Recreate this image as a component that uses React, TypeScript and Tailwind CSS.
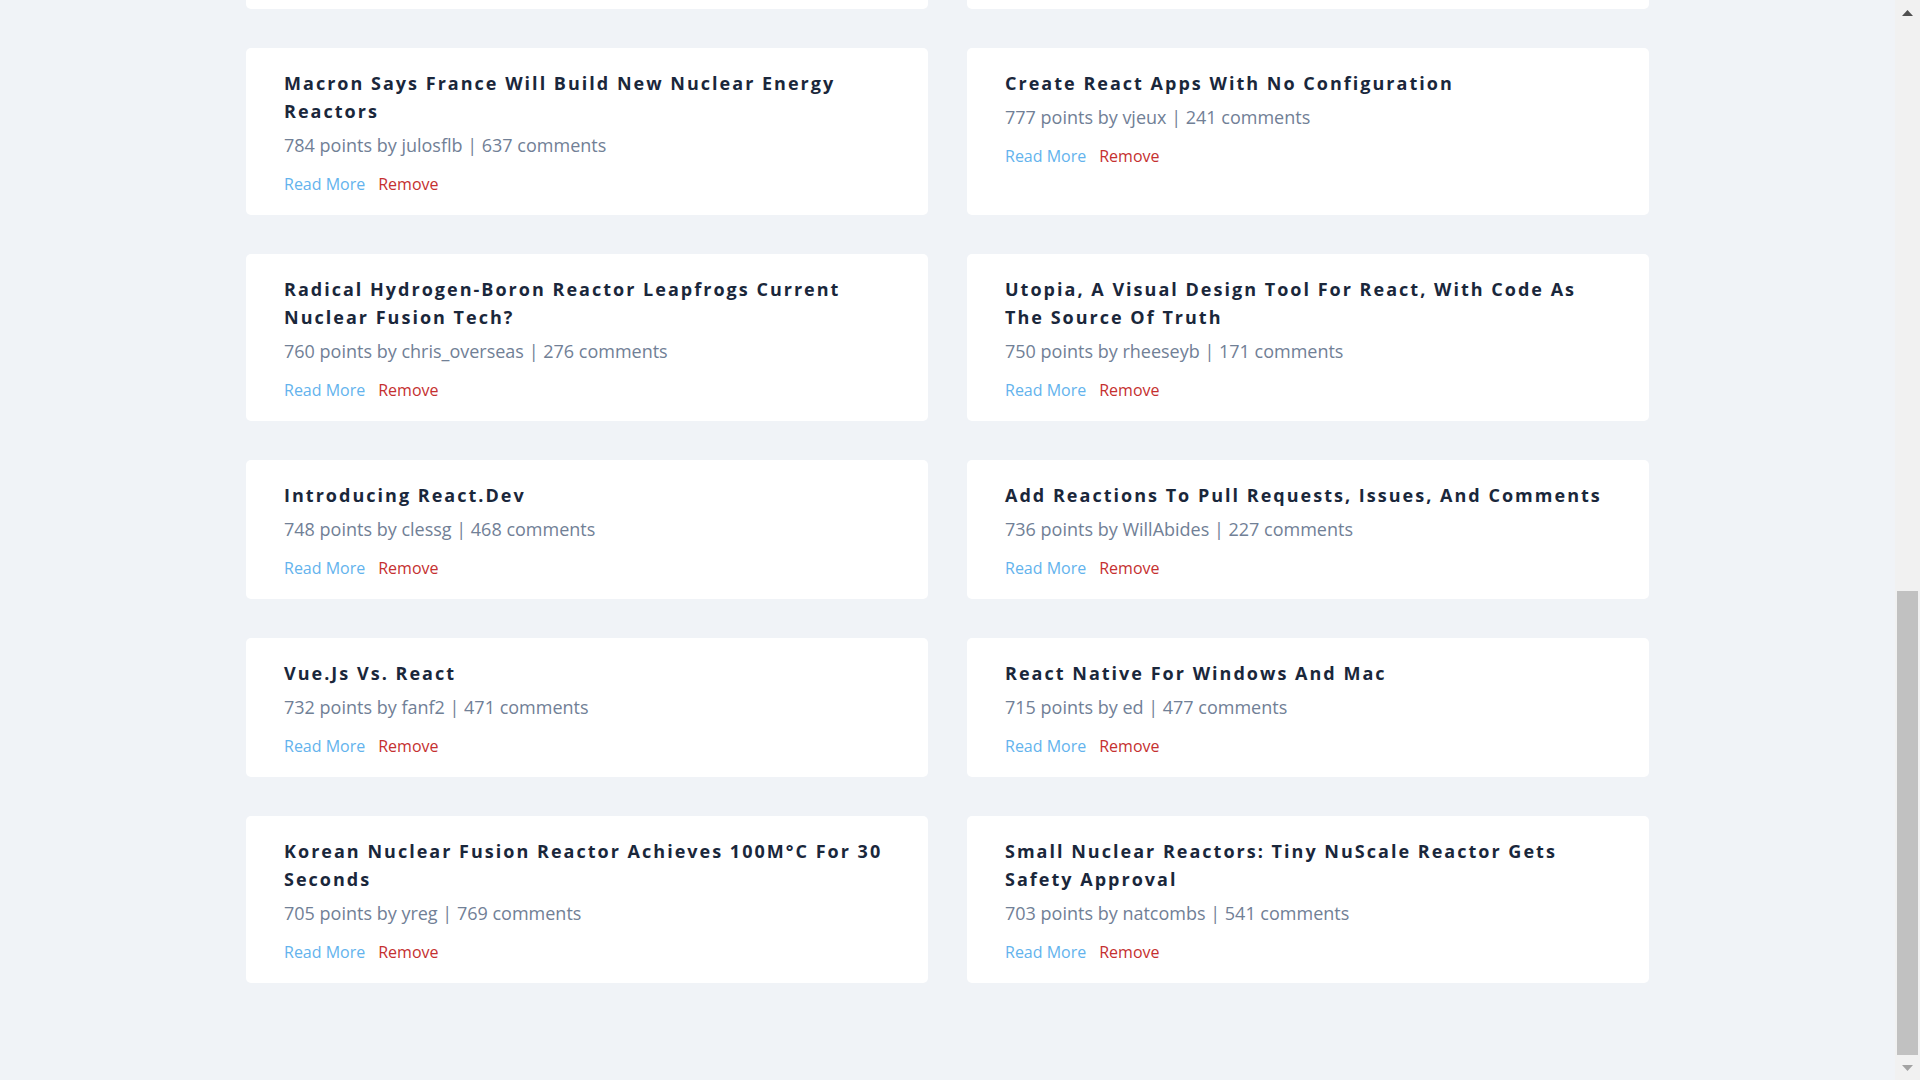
import { useEffect, useLayoutEffect, useRef, useState } from 'react';

interface Story {
  id: number;
  title: string;
  points: number;
  author: string;
  comments: number;
}

const initialStories: Story[] = [
  { id: 1, title: 'React 16 Released', points: 1268, author: 'sophiebits', comments: 412 },
  { id: 2, title: 'Nuclear Fusion Breakthrough: Net Energy Gain Achieved', points: 1190, author: 'ilamont', comments: 903 },
  { id: 3, title: 'Introducing Hooks', points: 1102, author: 'sophiebits', comments: 657 },
  { id: 4, title: 'Germany Shuts Down Its Last Nuclear Power Plants', points: 1045, author: 'mfiguiere', comments: 1322 },
  { id: 5, title: 'React Is Now MIT Licensed', points: 998, author: 'spicyj', comments: 318 },
  { id: 6, title: 'The Case For Nuclear Power', points: 962, author: 'jseliger', comments: 1104 },
  { id: 7, title: 'Facebook Relicenses React Under The MIT License', points: 921, author: 'dwwoelfel', comments: 287 },
  { id: 8, title: 'Why Nuclear Power Plants Cost So Much', points: 889, author: 'jonbaer', comments: 744 },
  { id: 9, title: 'React Server Components', points: 861, author: 'jeremyjh', comments: 376 },
  { id: 10, title: 'Svelte 3: Rethinking Reactivity', points: 842, author: 'uzername', comments: 402 },
  { id: 11, title: 'Preact: Fast 3kb React Alternative With The Same API', points: 820, author: 'tilt', comments: 233 },
  { id: 12, title: 'A New Nuclear Reactor Design Passes Key Safety Review', points: 801, author: 'bookofjoe', comments: 512 },
  { id: 13, title: 'Macron Says France Will Build New Nuclear Energy Reactors', points: 784, author: 'julosflb', comments: 637 },
  { id: 14, title: 'Create React Apps With No Configuration', points: 777, author: 'vjeux', comments: 241 },
  { id: 15, title: 'Radical Hydrogen-Boron Reactor Leapfrogs Current Nuclear Fusion Tech?', points: 760, author: 'chris_overseas', comments: 276 },
  { id: 16, title: 'Utopia, A Visual Design Tool For React, With Code As The Source Of Truth', points: 750, author: 'rheeseyb', comments: 171 },
  { id: 17, title: 'Introducing React.Dev', points: 748, author: 'clessg', comments: 468 },
  { id: 18, title: 'Add Reactions To Pull Requests, Issues, And Comments', points: 736, author: 'WillAbides', comments: 227 },
  { id: 19, title: 'Vue.Js Vs. React', points: 732, author: 'fanf2', comments: 471 },
  { id: 20, title: 'React Native For Windows And Mac', points: 715, author: 'ed', comments: 477 },
  { id: 21, title: 'Korean Nuclear Fusion Reactor Achieves 100M°C For 30 Seconds', points: 705, author: 'yreg', comments: 769 },
  { id: 22, title: 'Small Nuclear Reactors: Tiny NuScale Reactor Gets Safety Approval', points: 703, author: 'natcombs', comments: 541 },
];

function Scrollbar({ top, height, atBottom }: { top: number; height: number; atBottom: boolean }) {
  return (
    <div className="flex w-[25px] shrink-0 flex-col bg-[#f1f1f1]">
      <div className="flex h-[25px] items-center justify-center">
        <svg width="11" height="6" viewBox="0 0 11 6"><path d="M0 6 L5.5 0 L11 6 Z" fill="#505050" /></svg>
      </div>
      <div className="relative flex-1">
        <div className="absolute left-[2px] right-[2px] bg-[#c1c1c1]" style={{ top, height }} />
      </div>
      <div className="flex h-[25px] items-center justify-center">
        <svg width="11" height="6" viewBox="0 0 11 6"><path d="M0 0 L11 0 L5.5 6 Z" fill={atBottom ? '#a3a3a3' : '#505050'} /></svg>
      </div>
    </div>
  );
}

export default function App() {
  const [stories, setStories] = useState(initialStories);
  const scrollRef = useRef<HTMLDivElement>(null);
  const [thumb, setThumb] = useState({ top: 0, height: 0, atBottom: false });

  const measure = () => {
    const el = scrollRef.current;
    if (!el) return;
    const track = el.clientHeight - 50;
    setThumb({
      top: (track * el.scrollTop) / el.scrollHeight,
      height: (track * el.clientHeight) / el.scrollHeight,
      atBottom: el.scrollTop + el.clientHeight >= el.scrollHeight - 1,
    });
  };

  // page is shown scrolled down to the end of the list
  useLayoutEffect(() => {
    const el = scrollRef.current;
    if (el) el.scrollTop = el.scrollHeight;
    measure();
  }, []);

  useEffect(() => {
    measure();
  }, [stories]);

  const removeStory = (id: number) => setStories(stories.filter(s => s.id !== id));

  return (
    <div className="flex h-screen bg-[#f0f3f7] font-['Open_Sans','Liberation_Sans',sans-serif]">
      <div
        ref={scrollRef}
        onScroll={measure}
        className="flex-1 overflow-y-scroll [scrollbar-width:none] [&::-webkit-scrollbar]:hidden"
      >
        <div className="ml-[246px] w-[1403px] pt-[112px] pb-[97px]">
          <h1 className="mb-[80px] text-[32px] font-bold tracking-[0.08em] text-[#1c2a3f]">Hacker Stories</h1>
          <div className="grid grid-cols-2 gap-[39px]">
            {stories.map(story => (
              <div key={story.id} className="rounded-[5px] bg-white px-[38px] pt-[21px] pb-[19px]">
                <h2 className="text-[18px] font-bold leading-[28px] tracking-[0.112em] text-[#1a273b]">{story.title}</h2>
                <p className="mt-[6px] text-[18px] leading-[28px] text-[#718096]">
                  {story.points} points by {story.author} | {story.comments} comments
                </p>
                <div className="mt-[13px] flex gap-[13px] text-[16px] leading-[24px]">
                  <a href="#" className="text-[#63b3ed] hover:underline">Read More</a>
                  <button onClick={() => removeStory(story.id)} className="text-[#c53030] hover:underline">
                    Remove
                  </button>
                </div>
              </div>
            ))}
          </div>
        </div>
      </div>
      <Scrollbar top={thumb.top} height={thumb.height} atBottom={thumb.atBottom} />
    </div>
  );
}
